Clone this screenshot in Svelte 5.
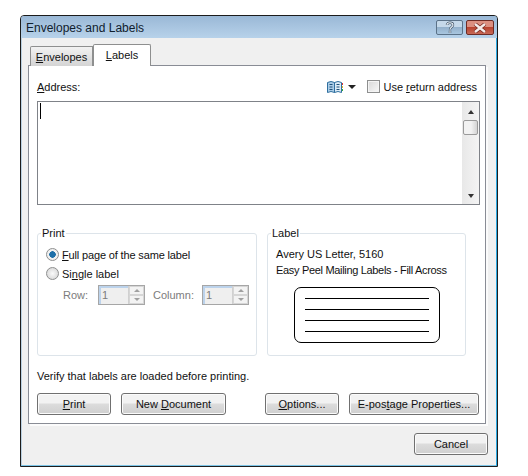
<script>
  let printMode = $state('full');
  let useReturn = $state(false);
</script>

<div class="window">
  <header class="titlebar">
    <span class="title">Envelopes and Labels</span>
    <div class="caption">
      <button class="cap help" aria-label="Help">
        <svg width="12" height="13" viewBox="0 0 12 13"><path d="M3 4 C3 1 9 1 9 4 C9 6 6 6 6 8.5 M6 9.5 V12" fill="none" stroke="#3c5064" stroke-width="2.4"/><path d="M3 4 C3 1 9 1 9 4 C9 6 6 6 6 8.5 M6 9.5 V12" fill="none" stroke="#eef4f9" stroke-width="1.1"/></svg>
      </button>
      <button class="cap close" aria-label="Close">
        <svg width="14" height="10" viewBox="0 0 14 10"><path d="M2 1 L12 9 M12 1 L2 9" stroke="#7a2a22" stroke-width="4"/><path d="M2 1 L12 9 M12 1 L2 9" stroke="#f4ecea" stroke-width="2.4"/></svg>
      </button>
    </div>
  </header>

  <div class="body">
    <div class="tabs">
      <div class="tab"><u>E</u>nvelopes</div>
      <div class="tab active"><u>L</u>abels</div>
    </div>

    <section class="panel">
      <div class="addr-head">
        <span><u>A</u>ddress:</span>
        <div class="addr-tools">
          <svg class="book" width="16" height="13" viewBox="0 0 16 13">
            <path d="M.5 2.5 Q4 .5 7.5 2.5 V12.5 Q4 10.5 .5 12.5 Z" fill="#a9cbe6" stroke="#2f6f9f"/>
            <path d="M7.5 2.5 Q11 .5 14.5 2.5 V12.5 Q11 10.5 7.5 12.5 Z" fill="#dcebf6" stroke="#2f6f9f"/>
            <path d="M2.5 4.5 H5.5 M2.5 7 H5.5 M2.5 9.5 H5.5 M9.5 4.5 H12.5 M9.5 7 H12.5 M9.5 9.5 H12.5" stroke="#1d4f78"/>
            <path d="M15.5 3 V5" stroke="#d33"/><path d="M15.5 6 V8" stroke="#e6b422"/><path d="M15.5 9 V11" stroke="#3a3"/>
          </svg>
          <span class="caret"></span>
          <label class="check">
            <input type="checkbox" bind:checked={useReturn} />
            <span class="box"></span>
            <span>Use <u>r</u>eturn address</span>
          </label>
        </div>
      </div>

      <div class="address">
        <span class="cursor"></span>
        <div class="scrollbar">
          <span class="arrow up"></span>
          <span class="thumb"></span>
          <span class="arrow down"></span>
        </div>
      </div>

      <div class="groups">
        <fieldset class="group print">
          <legend>Print</legend>
          <label class="radio">
            <input type="radio" value="full" bind:group={printMode} />
            <span class="dot"></span>
            <span class="tight"><u>F</u>ull page of the same label</span>
          </label>
          <label class="radio">
            <input type="radio" value="single" bind:group={printMode} />
            <span class="dot"></span>
            <span>Si<u>n</u>gle label</span>
          </label>
          <div class="rowcol">
            <span class="row-label">Row:</span>
            <div class="spin"><span class="val">1</span><span class="btns"><i class="up"></i><i class="down"></i></span></div>
            <span class="col-label">Column:</span>
            <div class="spin"><span class="val">1</span><span class="btns"><i class="up"></i><i class="down"></i></span></div>
          </div>
        </fieldset>

        <fieldset class="group label">
          <legend>Label</legend>
          <p>Avery US Letter, 5160</p>
          <p class="narrow">Easy Peel Mailing Labels - Fill Across</p>
          <div class="preview">
            <span></span><span></span><span></span><span></span>
          </div>
        </fieldset>
      </div>

      <p class="verify">Verify that labels are loaded before printing.</p>

      <div class="actions">
        <button class="btn print-btn"><u>P</u>rint</button>
        <button class="btn new-btn">New <u>D</u>ocument</button>
        <button class="btn opt-btn"><u>O</u>ptions...</button>
        <button class="btn post-btn">E-pos<u>t</u>age Properties...</button>
      </div>
    </section>

    <div class="footer">
      <button class="btn cancel">Cancel</button>
    </div>
  </div>
</div>

<style>
  :global(body) { background: #fff; }
  * { box-sizing: border-box; }
  .window {
    width: 478px;
    height: 452px;
    margin: 15px 0 0 20px;
    background: #f0f0f0;
    border: 1px solid #1c1c1c;
    border-radius: 4px 4px 0 0;
    box-shadow: inset -1px 0 #2aa9e2, inset 0 -1px #7cc4e6, inset 1px 0 #b9cfe0;
    font: 11px "Liberation Sans", Arial, sans-serif;
    color: #111;
    display: flex;
    flex-direction: column;
  }
  u { text-underline-offset: 1px; }
  p { margin: 0; }
  .titlebar {
    height: 22px;
    background: linear-gradient(#9ab8d6, #b7d2ea);
    display: flex;
    align-items: flex-start;
    justify-content: space-between;
    padding: 0 3px 0 5px;
    border-radius: 3px 3px 0 0;
  }
  .title { font-size: 12px; line-height: 24px; color: #10202e; }
  .caption { display: flex; gap: 3px; margin-top: 4px; }
  .cap {
    height: 15px;
    padding: 0;
    border: 1px solid #5b7288;
    border-radius: 2px;
    display: flex;
    align-items: center;
    justify-content: center;
  }
  .help { width: 27px; background: linear-gradient(#c5d9ea 45%, #93b1cc 50%, #a9c6df); }
  .close { width: 28px; border-color: #6e2b25; background: linear-gradient(#dc8f80 45%, #b9432f 50%, #c76a58); }

  .body { flex: 1; padding: 6px 11px 0 7px; }
  .tabs { display: flex; align-items: flex-end; height: 22px; padding-left: 2px; position: relative; z-index: 1; margin-bottom: -1px; }
  .tab {
    width: 63px;
    height: 20px;
    text-align: center;
    line-height: 21px;
    border: 1px solid #8e8f8f;
    border-bottom: 0;
    border-radius: 2px 0 0 0;
    background: linear-gradient(#f2f2f2, #d4d4d4);
  }
  .tab.active {
    width: 58px;
    height: 22px;
    line-height: 21px;
    background: #fff;
    border-left-color: #8e8f8f;
    border-radius: 2px 2px 0 0;
  }
  .panel {
    height: 359px;
    background: #fff;
    border: 1px solid #898c95;
    padding: 12px 5px 0 8px;
    box-shadow: 2px 2px 0 #fbfbfb;
  }
  .addr-head {
    display: flex;
    justify-content: space-between;
    align-items: center;
    height: 17px;
    padding-right: 3px;
  }
  .addr-tools { display: flex; align-items: center; }
  .book { margin-right: 5px; }
  .caret {
    width: 0;
    height: 0;
    border: 4px solid transparent;
    border-top: 4px solid #222;
    border-bottom: 0;
    margin-right: 11px;
  }
  .check, .radio { display: flex; align-items: center; }
  .check input, .radio input { display: none; }
  .box {
    width: 13px;
    height: 13px;
    margin-right: 3px;
    border: 1px solid #8e8f8f;
    background: linear-gradient(135deg, #d8d8d8, #f8f8f8);
    box-shadow: inset 0 0 0 1px #f4f4f4;
  }
  .address {
    height: 104px;
    margin-top: 6px;
    border: 1px solid #7f8288;
    display: flex;
    justify-content: space-between;
    padding-left: 2px;
  }
  .cursor { width: 1px; height: 16px; background: #000; margin-top: 1px; }
  .scrollbar {
    width: 17px;
    background: linear-gradient(90deg, #e8e8e8, #f4f4f4);
    display: flex;
    flex-direction: column;
    align-items: center;
    padding: 8px 0 4px;
  }
  .thumb {
    width: 15px;
    height: 15px;
    margin-top: 6px;
    border: 1px solid #9a9a9a;
    border-radius: 2px;
    background: linear-gradient(90deg, #f2f2f2 55%, #d4d4d4);
  }
  .arrow { width: 0; height: 0; border: 3.5px solid transparent; }
  .arrow.up { border-bottom: 4px solid #333; border-top: 0; }
  .arrow.down { border-top: 4px solid #333; border-bottom: 0; margin-top: auto; margin-bottom: 2px; }

  .groups { display: flex; gap: 10px; margin-top: 21px; }
  .group {
    margin: 0;
    height: 130px;
    border: 1px solid #dde4ea;
    border-radius: 3px;
    padding: 0;
  }
  legend { padding: 0 1px; margin-left: -5px; line-height: 14px; }
  .print { width: 220px; padding: 5px 0 0 8px; }
  .label { width: 199px; padding: 6px 0 0 8px; }
  .label p { line-height: 16px; }
  .label .narrow { letter-spacing: -0.32px; }
  .tight { letter-spacing: -0.15px; }
  .radio { height: 19px; }
  .dot {
    width: 13px;
    height: 13px;
    border-radius: 50%;
    border: 1px solid #8e8f8f;
    background: radial-gradient(#fafafa, #d0d0d0);
    margin-right: 3px;
  }
  .radio input:checked + .dot {
    background: radial-gradient(circle, #1d6fa8 0 3px, #f0f0f0 3.5px);
  }
  .rowcol {
    display: flex;
    align-items: center;
    margin-top: 2px;
    padding-left: 17px;
    color: #7c7c7c;
  }
  .row-label { width: 35px; }
  .col-label { width: 49px; margin-left: 8px; }
  .spin {
    width: 47px;
    height: 20px;
    border: 1px solid #a6a6a6;
    background: #efefef;
    display: flex;
    justify-content: space-between;
    box-shadow: inset 2px 2px 0 #bcd3ec;
    padding-left: 3px;
    line-height: 18px;
  }
  .btns { width: 16px; display: flex; flex-direction: column; border-left: 1px solid #d0d0d0; }
  .btns i { flex: 1; display: flex; align-items: center; justify-content: center; background: #f3f3f3; border: 1px solid #d6d6d6; }
  .btns i::after { content: ''; border: 3px solid transparent; }
  .btns .up::after { border-bottom: 3px solid #a0a0a0; border-top: 0; }
  .btns .down::after { border-top: 3px solid #a0a0a0; border-bottom: 0; }
  .preview {
    width: 146px;
    height: 56px;
    margin: 9px 0 0 18px;
    border: 1px solid #000;
    border-radius: 7px;
    padding: 10px 10px 0;
    display: flex;
    flex-direction: column;
    gap: 10px;
  }
  .preview span { height: 1px; background: #000; }
  .verify { margin-top: 13px; line-height: 14px; }
  .actions { display: flex; margin-top: 10px; }
  .btn {
    height: 22px;
    padding: 0;
    font: inherit;
    color: #111;
    border: 1px solid #707070;
    border-radius: 3px;
    background: linear-gradient(#f2f2f2 45%, #dcdcdc 50%, #cfcfcf);
    box-shadow: inset 0 0 0 1px #fbfbfb;
  }
  .print-btn { width: 74px; }
  .new-btn { width: 105px; margin-left: 10px; }
  .opt-btn { width: 74px; margin-left: 39px; }
  .post-btn { width: 130px; margin-left: 10px; }
  .footer { display: flex; justify-content: flex-end; margin: 9px -2px 0 0; }
  .cancel { width: 74px; }
</style>
